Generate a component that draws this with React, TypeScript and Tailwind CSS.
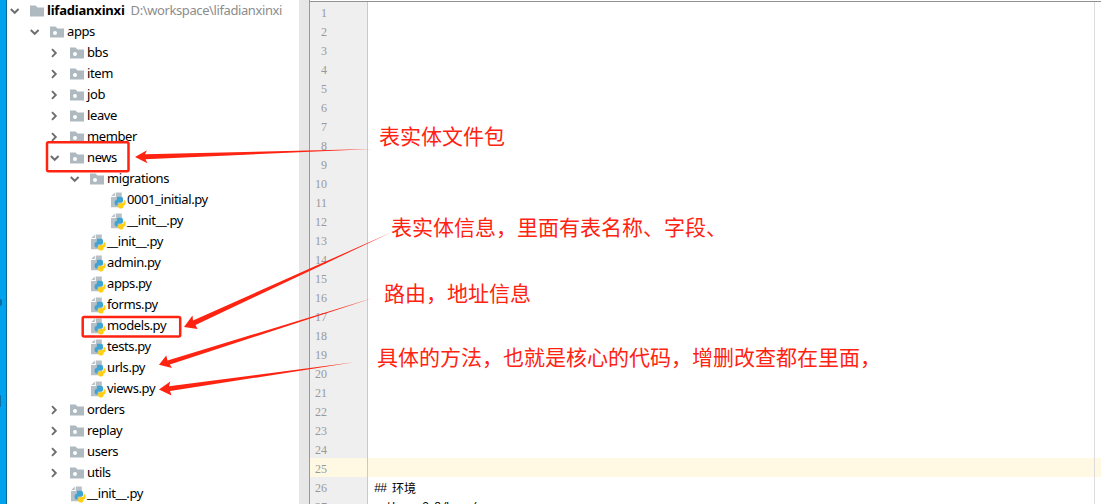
import { clsx } from "clsx";

type NodeKind = "root" | "package" | "python";

interface TreeNode {
  id: number;
  name: string;
  kind: NodeKind;
  indent: string;
  open?: boolean;
  path?: string;
}

// left padding of each depth, measured to the chevron column
const INDENT = {
  d0: "pl-0",
  d1: "pl-5",
  d2: "pl-10",
  d3: "pl-15",
  d4: "pl-20",
};

const TREE: TreeNode[] = [
  { id: 1,  name: "lifadianxinxi",   kind: "root",    indent: INDENT.d0, open: true, path: "D:\\workspace\\lifadianxinxi" },
  { id: 2,  name: "apps",            kind: "package", indent: INDENT.d1, open: true },
  { id: 3,  name: "bbs",             kind: "package", indent: INDENT.d2 },
  { id: 4,  name: "item",            kind: "package", indent: INDENT.d2 },
  { id: 5,  name: "job",             kind: "package", indent: INDENT.d2 },
  { id: 6,  name: "leave",           kind: "package", indent: INDENT.d2 },
  { id: 7,  name: "member",          kind: "package", indent: INDENT.d2 },
  { id: 8,  name: "news",            kind: "package", indent: INDENT.d2, open: true },
  { id: 9,  name: "migrations",      kind: "package", indent: INDENT.d3, open: true },
  { id: 10, name: "0001_initial.py", kind: "python",  indent: INDENT.d4 },
  { id: 11, name: "__init__.py",     kind: "python",  indent: INDENT.d4 },
  { id: 12, name: "__init__.py",     kind: "python",  indent: INDENT.d3 },
  { id: 13, name: "admin.py",        kind: "python",  indent: INDENT.d3 },
  { id: 14, name: "apps.py",         kind: "python",  indent: INDENT.d3 },
  { id: 15, name: "forms.py",        kind: "python",  indent: INDENT.d3 },
  { id: 16, name: "models.py",       kind: "python",  indent: INDENT.d3 },
  { id: 17, name: "tests.py",        kind: "python",  indent: INDENT.d3 },
  { id: 18, name: "urls.py",         kind: "python",  indent: INDENT.d3 },
  { id: 19, name: "views.py",        kind: "python",  indent: INDENT.d3 },
  { id: 20, name: "orders",          kind: "package", indent: INDENT.d2 },
  { id: 21, name: "replay",          kind: "package", indent: INDENT.d2 },
  { id: 22, name: "users",           kind: "package", indent: INDENT.d2 },
  { id: 23, name: "utils",           kind: "package", indent: INDENT.d2 },
  { id: 24, name: "__init__.py",     kind: "python",  indent: INDENT.d2 },
];

const LINES = Array.from({ length: 27 }, (_, i) => i + 1);
const ACTIVE_LINE = 25;

const CODE: Record<number, { latin: string; cjk?: string }> = {
  26: { latin: "## ", cjk: "环境" },
  27: { latin: "python  3.8/base/" },
};

const NOTES = [
  { text: "表实体文件包",                                       place: "left-[379px] top-[120px]" },
  { text: "表实体信息，里面有表名称、字段、",                     place: "left-[391px] top-[211px]" },
  { text: "路由，地址信息",                                     place: "left-[384px] top-[277px]" },
  { text: "具体的方法，也就是核心的代码，增删改查都在里面，",       place: "left-[377px] top-[341px]" },
];

function Chevron({ open }: { open?: boolean }) {
  return (
    <svg width="10" height="10" viewBox="0 0 10 10" fill="none" stroke="#6e6e6e" strokeWidth="1.9">
      <path d={open ? "M0.8 3 L4.7 6.8 L8.6 3" : "M2 1.2 L5.8 5 L2 8.8"} />
    </svg>
  );
}

function FolderIcon({ dot }: { dot: boolean }) {
  return (
    <svg width="14" height="12" viewBox="0 0 14 12">
      <path d="M0 0.5 H5.5 L7.5 2.5 H14 V11.5 H0 Z" fill="#aeb9c0" />
      {dot && <circle cx="5" cy="7" r="2" fill="#fff" />}
    </svg>
  );
}

function PythonIcon() {
  return (
    <svg width="15" height="17" viewBox="0 0 15 17">
      <path d="M4.8 0.5 H10.8 V15.3 H0 V5 H4.8 Z" fill="#b7c0c6" />
      <path d="M3.8 0.5 V4 H0.3 Z" fill="#b7c0c6" />
      <path
        d="M7 4.8 H10 Q12 4.8 12 6.8 V9 Q12 10.6 10.4 10.6 H8 Q6.6 10.6 6.6 12 V13.4 H5.6 Q3.6 13.4 3.6 11.4 V9.8 Q3.6 7.9 5.6 7.9 H5.8 V6 Q5.8 4.8 7 4.8 Z"
        fill="#40a4d3"
      />
      <path
        d="M12.6 8 Q14.6 8 14.6 10 V11.4 Q14.6 13.4 12.6 13.4 V14.6 Q12.6 16.4 10.8 16.4 H9 Q7.2 16.4 7.2 14.6 V12.8 Q7.2 11.2 8.8 11.2 H11 Q12.6 11.2 12.6 9.6 Z"
        fill="#ffd012"
      />
    </svg>
  );
}

function TreeRow({ node }: { node: TreeNode }) {
  return (
    <div className={clsx("flex h-[21px] items-center whitespace-nowrap", node.indent)}>
      <span className="flex w-[23px] shrink-0 items-center pl-[3px]">
        {node.kind !== "python" && <Chevron open={node.open} />}
      </span>
      <span className={clsx("flex w-[17px] shrink-0 items-center", node.kind === "python" && "pl-px pt-px")}>
        {node.kind === "python" ? <PythonIcon /> : <FolderIcon dot={node.kind === "package"} />}
      </span>
      <span
        className={clsx(
          "text-[13px] leading-[21px] text-black",
          node.kind === "root" ? "font-bold tracking-[-0.2px]" : "tracking-[-0.4px]",
        )}
      >
        {node.name}
      </span>
      {node.path && (
        <span className="ml-[6px] text-[13px] leading-[21px] tracking-[-0.4px] text-[#8c8c8c]">{node.path}</span>
      )}
    </div>
  );
}

function Markup() {
  return (
    <svg className="absolute left-0 top-0" width="1101" height="504" viewBox="0 0 1101 504" fill="#ff2312">
      <g fill="none" stroke="#ff2312" strokeWidth="2.5">
        <rect x="47" y="142.3" width="81.5" height="29" rx="1.5" />
        <rect x="82.7" y="317" width="97.5" height="19.5" rx="1.5" />
      </g>
      <path d="M135 157 L147 150.3 L145 154.3 L372 149 L145.5 159.2 L147.5 163.2 Z" />
      <path d="M184 327 L192.5 315.5 L193 320.4 L391 232.5 L195.5 325 L197.5 329 Z" />
      <path d="M159 364.7 L166.3 355.5 L167.5 360.4 L373 298 L169.8 364.6 L172 368 Z" />
      <path d="M159 389.5 L170.3 381.5 L169 386.2 L354 362.3 L170 391 L171.5 395.4 Z" />
    </svg>
  );
}

export default function App() {
  return (
    <div className="relative flex h-[504px] w-[1101px] overflow-hidden bg-white">
      {/* Window edge */}
      <div className="w-[7px] shrink-0 border-r border-[#07689a] bg-[#00a2ed]" />

      {/* Project tree */}
      <div className="w-[292px] shrink-0 overflow-hidden font-['Noto_Sans',sans-serif]">
        {TREE.map((node) => (
          <TreeRow key={node.id} node={node} />
        ))}
      </div>
      <div className="w-[11px] shrink-0 border-r border-[#999] bg-[#e7e7e7]" />

      {/* Editor */}
      <div className="flex min-w-0 flex-1 flex-col">
        <div className="h-[2px] shrink-0 border-b border-[#919191] bg-white" />
        <div className="flex min-h-0 flex-1 overflow-hidden">
          <div className="w-[58px] shrink-0 border-r border-[#c9c9c9] bg-[#efefef]">
            {LINES.map((n) => (
              <div
                key={n}
                className={clsx(
                  "h-[19px] pr-[40px] pt-[2px] text-right font-['Liberation_Serif',serif] text-[12px] leading-[19px] text-[#999]",
                  n === ACTIVE_LINE && "bg-[#fff9e3]",
                )}
              >
                {n}
              </div>
            ))}
          </div>
          <div className="min-w-0 flex-1">
            {LINES.map((n) => (
              <div
                key={n}
                className={clsx(
                  "flex h-[19px] whitespace-pre pl-[6px] pt-[3px] text-[12px] leading-[19px] text-black",
                  n === ACTIVE_LINE && "bg-[#fff9e3]",
                )}
              >
                <span className="font-['Liberation_Mono',monospace] tracking-[-1.2px]">{CODE[n]?.latin}</span>
                <span className="-mt-[2px] font-['Noto_Sans_CJK_SC',sans-serif]">{CODE[n]?.cjk}</span>
              </div>
            ))}
          </div>
        </div>
      </div>

      {/* Right margin guide */}
      <div className="absolute left-[1094px] top-[2px] h-[502px] w-px bg-[#dcdcdc]" />

      {/* Desktop marks showing past the window edge */}
      <div className="absolute left-0 top-[299px] h-[7px] w-[2px] rounded-r bg-[#0b6fa3]" />
      <div className="absolute left-0 top-[395px] h-[12px] w-px rounded-r bg-[#0b6fa3]" />

      {/* Annotations */}
      <Markup />
      {NOTES.map((note) => (
        <p
          key={note.text}
          className={clsx(
            "absolute whitespace-nowrap font-['Noto_Sans_CJK_SC',sans-serif] text-[21px] leading-[30px] text-[#ff2312]",
            note.place,
          )}
        >
          {note.text}
        </p>
      ))}
    </div>
  );
}
